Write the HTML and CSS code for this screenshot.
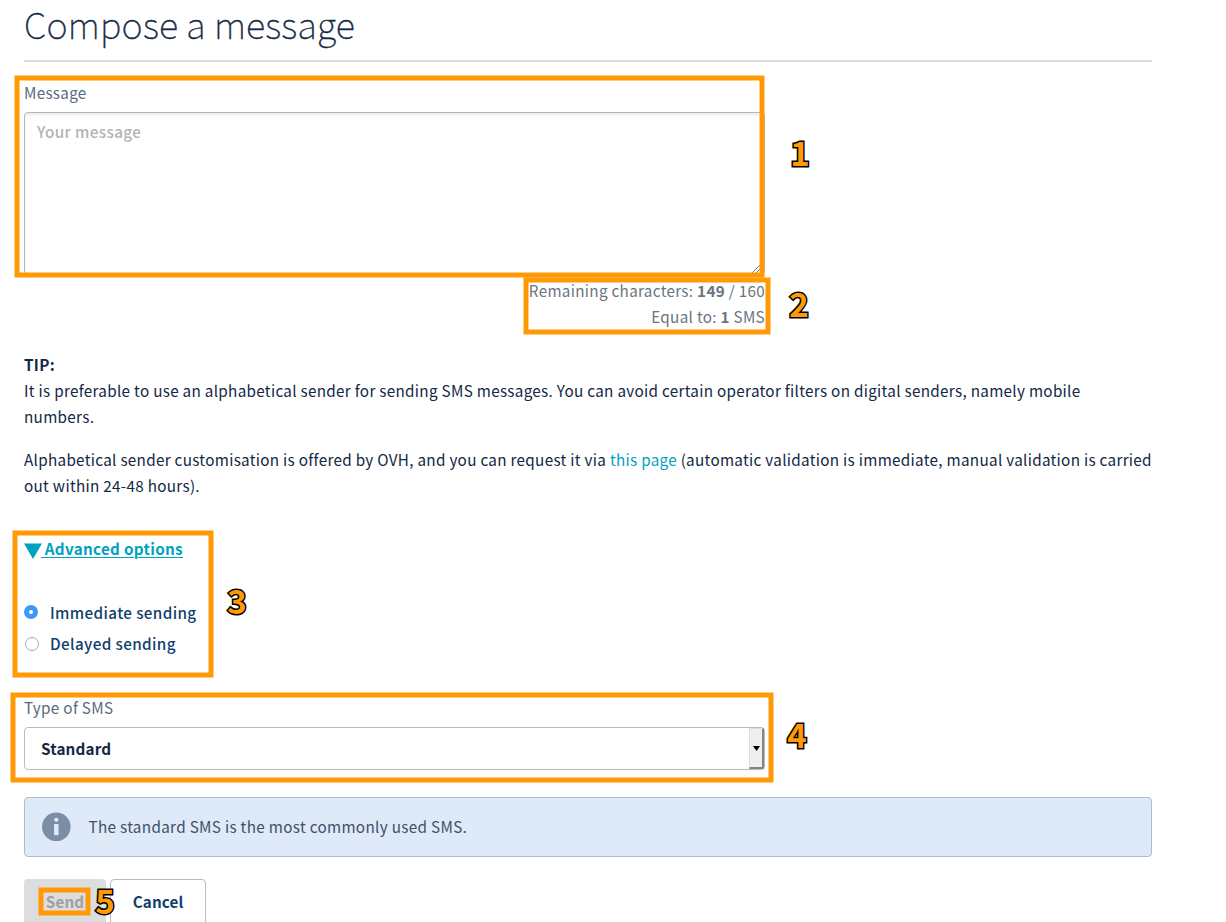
FILE: index.html
```html
<!DOCTYPE html>
<html lang="en">
<head>
<meta charset="utf-8">
<title>Compose a message</title>
<link rel="stylesheet" href="styles.css">
</head>
<body>
<main class="page">
  <h1 class="title"><span>Compose a message</span></h1>
  <form class="form">
    <label class="label" for="msg">Message</label>
    <div class="textarea" id="msg"><span class="placeholder">Your message</span>
      <svg class="grip" width="9" height="9" viewBox="0 0 9 9"><path d="M0 9L9 0M4 9L9 4" stroke="#777" stroke-width="1" fill="none"/></svg>
    </div>
    <div class="counter">
      <div class="remaining">Remaining characters: <b>149</b> / 160</div>
      <div class="equal">Equal to: <b>1</b> SMS</div>
    </div>
    <div class="tip">
      <p><b class="tip-title">TIP:</b><br><span class="l1">It is preferable to use an alphabetical sender for sending SMS messages. You can avoid certain operator filters on digital senders, namely mobile</span><br><span>numbers.</span></p>
      <p><span class="l2">Alphabetical sender customisation is offered by OVH, and you can request it via <a class="link">this page</a> (automatic validation is immediate, manual validation is carried</span><br><span>out within 24-48 hours).</span></p>
    </div>
    <a class="advanced"><svg class="tri" width="18" height="16" viewBox="0 0 18 16"><path d="M0 0.5H18L9 16Z" fill="#00a2bf"/></svg><span class="advanced-text">&nbsp;Advanced options</span></a>
    <div class="radios">
      <div class="radio"><i class="dot on"></i><span>Immediate sending</span></div>
      <div class="radio"><i class="dot off"></i><span>Delayed sending</span></div>
    </div>
    <label class="label type-label">Type of SMS</label>
    <div class="select"><span>Standard</span>
      <div class="arrow"><svg width="7" height="5" viewBox="0 0 7 5"><path d="M0 0H7L3.5 5Z" fill="#000"/></svg></div>
    </div>
    <div class="info">
      <svg class="info-icon" width="30" height="30" viewBox="0 0 30 30"><circle cx="15.3" cy="14.8" r="14.3" fill="#7d8da5"/><circle cx="15.3" cy="7.8" r="2.1" fill="#deeaf8"/><path d="M13.1 12h4.4v11.2h-4.4z" fill="#deeaf8"/></svg>
      <span>The standard SMS is the most commonly used SMS.</span>
    </div>
    <div class="actions">
      <div class="btn send"><span>Send</span></div>
      <div class="btn cancel"><span>Cancel</span></div>
    </div>
  </form>
</main>
<div class="mark m1"></div><div class="mark m2"></div><div class="mark m3"></div><div class="mark m4"></div><div class="mark m5"></div>
<div class="num n1">1</div><div class="num n2">2</div><div class="num n3">3</div><div class="num n4">4</div><div class="num n5">5</div>
</body>
</html>
```
FILE: styles.css
```css
* { box-sizing: border-box; }
html, body { margin: 0; height: 922px; overflow: hidden; background: #fff; }
body {
  position: relative;
  font-family: "Noto Sans CJK SC", "Noto Sans", sans-serif;
  font-size: 15.25px;
  letter-spacing: 0.3px;
  line-height: 26px;
  color: #122844;
  white-space: nowrap;
}
.page { width: 1128px; margin-left: 24px; }
.title {
  margin: 0;
  height: 62px;
  border-bottom: 2px solid #dcdcdc;
  font-size: 36px;
  font-weight: 100;
  letter-spacing: 0.2px;
  line-height: 46px;
  -webkit-text-stroke: 0.4px #122844;
}
.form { display: flex; flex-direction: column; align-items: flex-start; }
.label { display: block; margin-top: 17px; color: #59697f; }
.textarea {
  position: relative;
  width: 741px;
  height: 163px;
  margin-top: 7px;
  padding: 5px 12px;
  border: 1px solid #b4b6bb;
  border-radius: 4px;
  box-shadow: inset 0 2px 3px #ececf2;
  color: #b3b3b3;
  font-weight: 500;
  letter-spacing: 0.37px;
}
.grip { position: absolute; right: 3px; bottom: 1px; }
.counter { width: 741px; margin-top: 2px; text-align: right; color: #6b7580; }
.tip { margin-top: 22px; }
.tip p { margin: 0 0 17px; }
.link { color: #00a2bf; }
.advanced { display: flex; margin-top: 20px; color: #00a2bf; font-weight: 700; }
.tri { margin-top: 8px; }
.advanced-text { margin-left: -1px; text-decoration: underline; text-underline-offset: 2px; text-decoration-thickness: 1px; }
.radios { margin-top: 35px; color: #113f6d; font-weight: 500; letter-spacing: 0.37px; }
.radio { display: flex; align-items: center; height: 31px; }
.dot { width: 14px; height: 14px; margin: 0 12px 0 0; border: 1px solid #aaa; border-radius: 50%; }
.dot.on { border: 5px solid #3b99fc; }
.dot.off { margin: 2px 11px 0 1px; }
.type-label { margin-top: 36px; }
.select {
  display: flex;
  align-items: center;
  justify-content: space-between;
  width: 741px;
  height: 43px;
  margin-top: 7px;
  padding-left: 16px;
  border: 1px solid #b9bbbe;
  border-radius: 4px;
  font-weight: 700;
  letter-spacing: 0.15px;
}
.select span, .info span, .btn span { padding-bottom: 2px; }
.arrow {
  display: flex;
  align-items: center;
  justify-content: center;
  width: 15px;
  height: 41px;
  background: #efefef;
  border: solid;
  border-width: 1px 2px 2px 1px;
  border-color: #ddd #858585 #858585 #ddd;
}
.info {
  display: flex;
  align-items: center;
  width: 1128px;
  height: 60px;
  margin-top: 27px;
  padding-left: 16px;
  border: 1px solid #afbdcd;
  border-radius: 4px;
  background: #deeaf8;
  color: #3f5069;
  letter-spacing: 0.32px;
}
.info-icon { margin-right: 17.5px; }
.actions { display: flex; gap: 4px; margin-top: 22px; }
.btn { display: flex; align-items: center; justify-content: center; height: 46px; border-radius: 4px; font-weight: 700; letter-spacing: 0.1px; }
.send { width: 82px; background: #dcdddf; color: #a0a0a0; }
.cancel { width: 96px; border: 1px solid #bbb; color: #113f6d; }
.mark { position: absolute; border: 5px solid #ff9a05; transform: translate(0.5px, 0.5px); }
.m1 { left: 14px; top: 75px; width: 750px; height: 202px; }
.m2 { left: 523px; top: 277px; width: 247px; height: 57px; }
.m3 { left: 12px; top: 530px; width: 201px; height: 147px; }
.m4 { left: 10px; top: 692px; width: 763px; height: 90px; }
.m5 { left: 38px; top: 887px; width: 52px; height: 28px; }
.num {
  position: absolute;
  width: 24px;
  text-align: center;
  font: 700 33px/36px "Noto Sans CJK SC", sans-serif;
  letter-spacing: 0;
  color: #ff9a05;
  -webkit-text-stroke: 3px #000;
  paint-order: stroke fill;
}
.n1 { left: 788px; top: 134px; }
.n2 { left: 787px; top: 285px; }
.n3 { left: 225px; top: 582px; }
.n4 { left: 785px; top: 716px; }
.n5 { left: 93px; top: 882px; }
```
